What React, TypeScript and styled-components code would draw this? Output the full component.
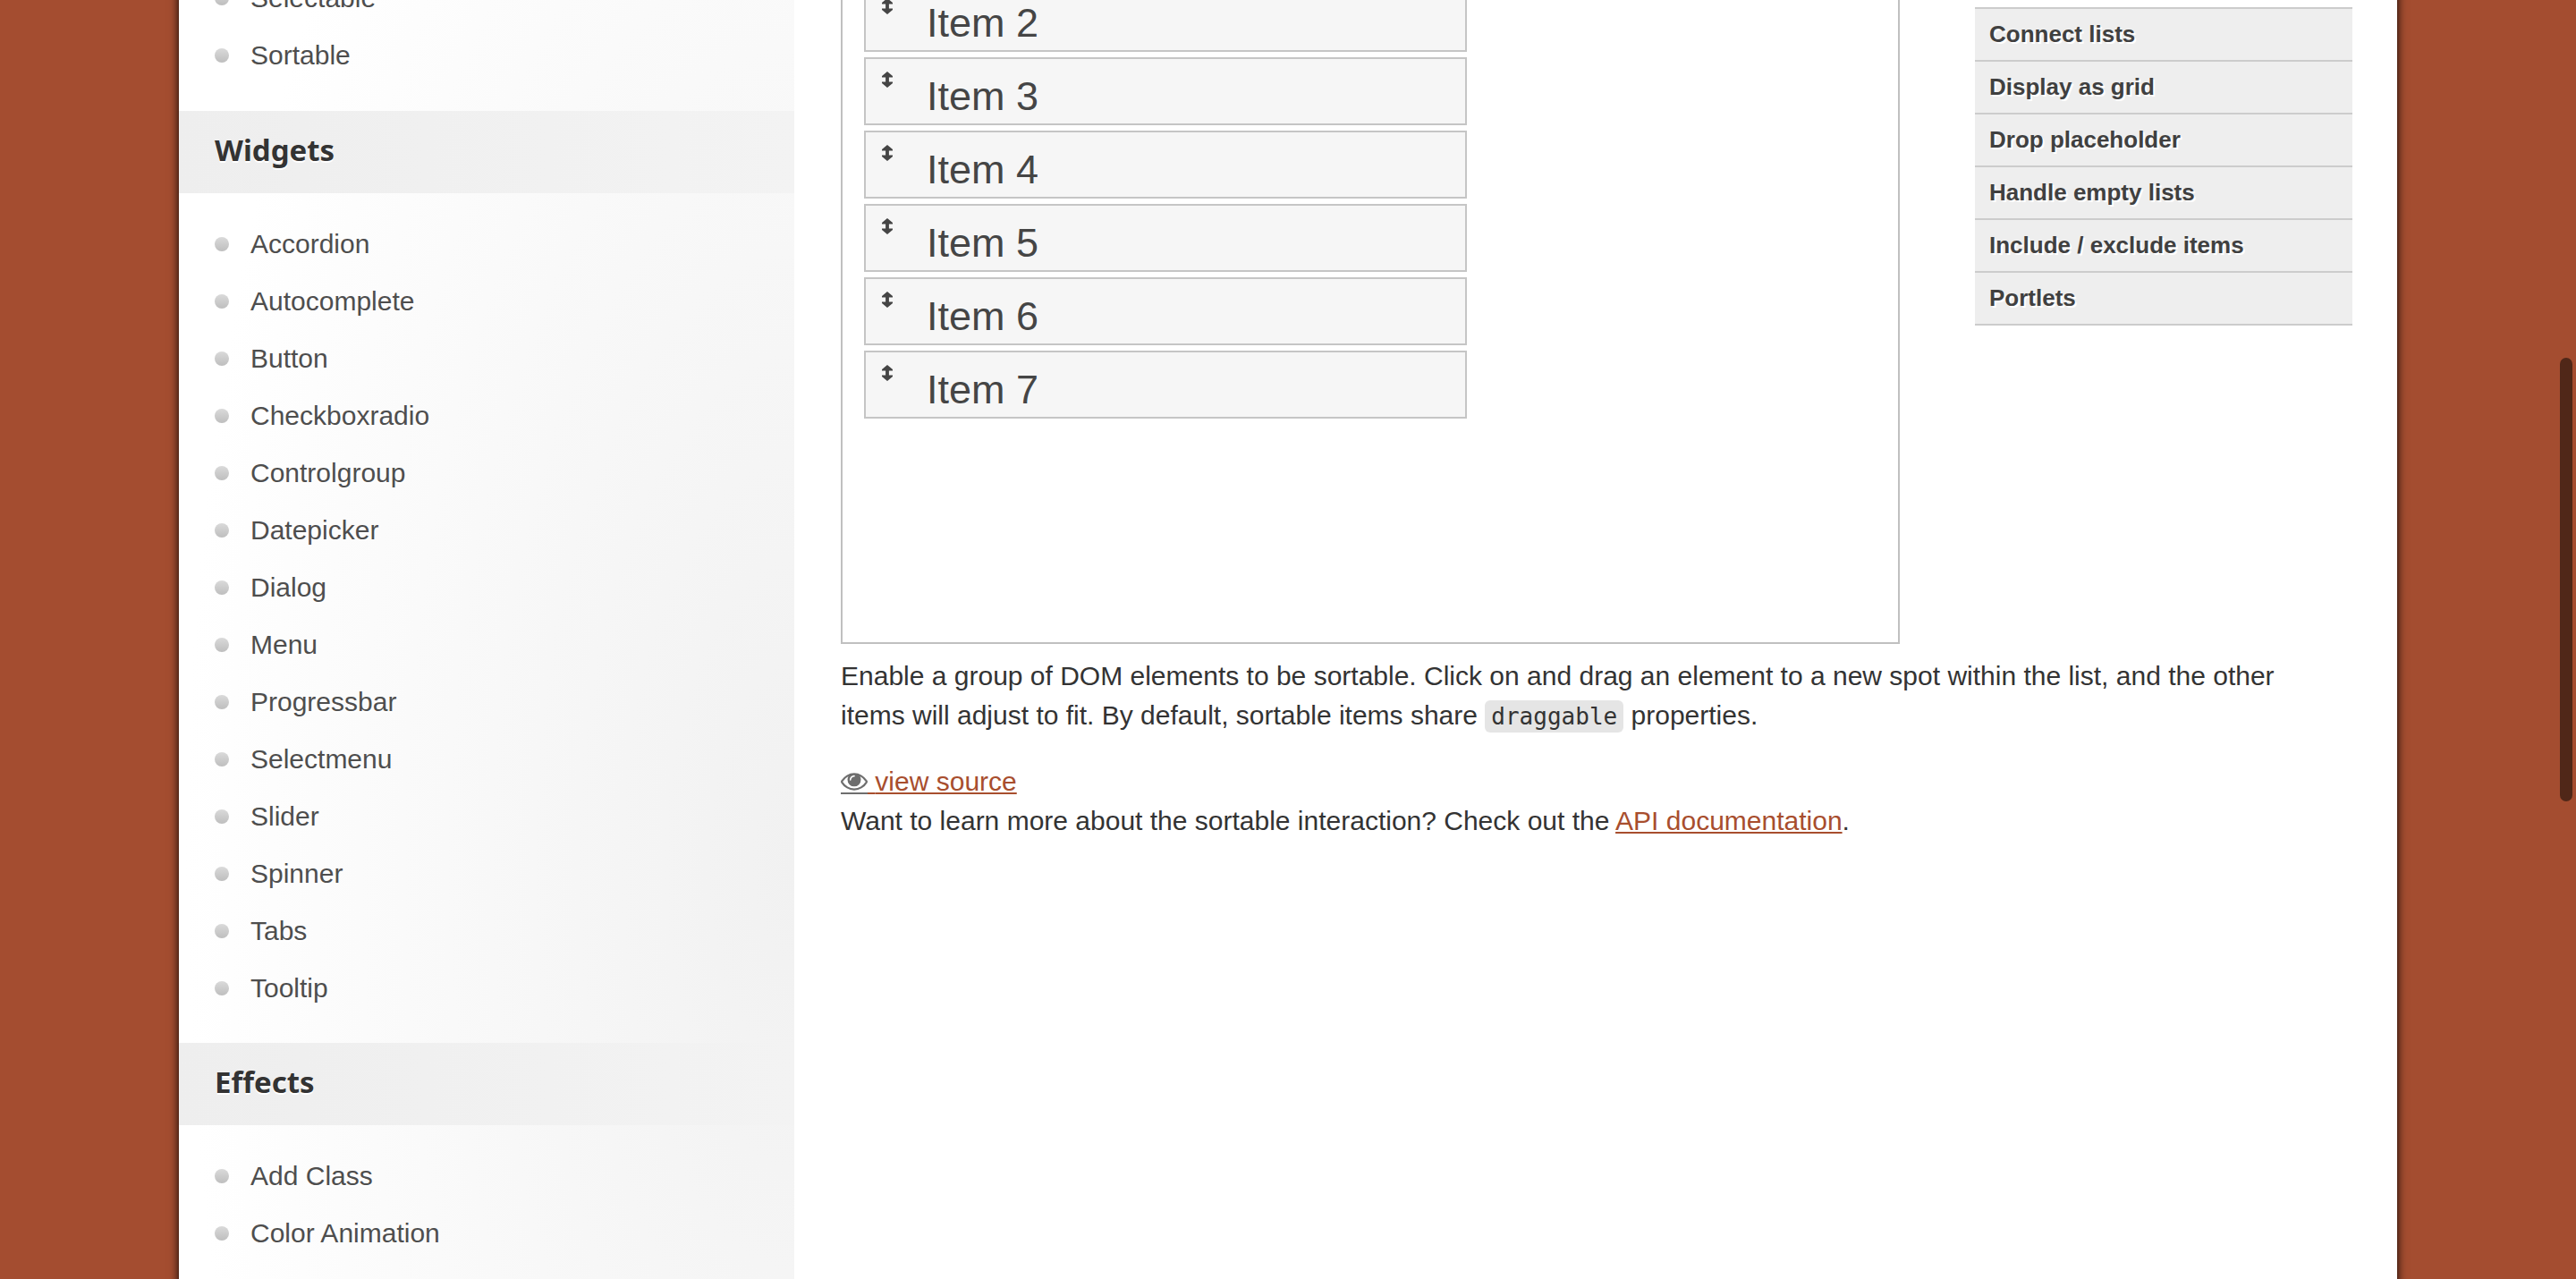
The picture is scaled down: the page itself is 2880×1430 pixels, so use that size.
import React from "react";
import styled, { createGlobalStyle } from "styled-components";

const sans = '"Liberation Sans", Arial, Helvetica, sans-serif';
const heading = '"Noto Sans", "Open Sans", sans-serif';
const mono = '"DejaVu Sans Mono", "Liberation Mono", monospace';

const GlobalStyle = createGlobalStyle`
  * { box-sizing: border-box; }
  body {
    margin: 0;
    background: #a44d30;
    color: #333;
    font-family: ${sans};
    font-size: 30px;
    line-height: 44px;
  }
  a { color: #a84e2e; }
  ul, ol, p, h3 { margin: 0; padding: 0; }
  ul, ol { list-style: none; }
`;

const Viewport = styled.div`
  height: 100vh;
  overflow: hidden;
  position: relative;
`;

const Container = styled.div`
  display: flex;
  min-height: calc(100vh + 34px);
  margin: -34px 200px 0;
  background: #fff;
  box-shadow: 0 0 10px #000;
`;

const Sidebar = styled.aside`
  flex: 0 0 688px;
  background: radial-gradient(ellipse 680px 1600px at 100% 1000px, #f1f1f1, #fff);
`;

const NavTitle = styled.h3`
  padding: 0 40px 4px;
  background: linear-gradient(to right, #eee, #f3f3f3);
  font: 700 33px/88px ${heading};
  color: #333;
  text-shadow: 0 2px 0 #fff;
`;

const NavList = styled.ul<{ $continued?: boolean }>`
  padding: ${(p) => (p.$continued ? "0 40px 30px" : "25px 40px 29px")};
`;

const NavItem = styled.li`
  display: flex;
  align-items: center;
  gap: 24px;
  height: 64px;

  &::before {
    content: "";
    width: 16px;
    height: 16px;
    border-radius: 50%;
    background: linear-gradient(#dadada, #bebebe);
  }
`;

const NavLink = styled.a`
  color: #4e4e4e;
  text-decoration: none;
  text-shadow: 0 2px 0 #fff;
`;

const Content = styled.main`
  flex: 1;
  min-width: 0;
  padding: 0 50px 0 52px;
`;

const DemoRow = styled.div`
  display: flex;
  align-items: flex-start;
  gap: 84px;
  margin-bottom: 14px;
`;

const DemoFrame = styled.section`
  flex: 1;
  height: 754px;
  padding: 16px 24px;
  border: 2px solid #c0c0c0;
  border-top: 0;
`;

const SortableList = styled.ul`
  display: grid;
  gap: 6px;
  width: 674px;
  max-width: 100%;
`;

const SortableItem = styled.li`
  display: flex;
  gap: 38px;
  height: 76px;
  padding: 12px 18px 0;
  border: 2px solid #c5c5c5;
  background: #f6f6f6;
  color: #454545;
  font-size: 45px;
  line-height: 60px;
  cursor: move;

  svg {
    flex: none;
    margin-top: 2px;
  }
`;

const Examples = styled.ul`
  flex: 0 0 422px;
  margin-top: 42px;
  border-top: 2px solid #ccc;
`;

const Example = styled.li`
  border-bottom: 2px solid #ccc;
  background: #eee;
`;

const ExampleLink = styled.a`
  display: block;
  padding: 0 16px;
  color: #404040;
  font-size: 26px;
  font-weight: 700;
  line-height: 57px;
  text-decoration: none;
  text-shadow: 2px 2px 0 #fff;
`;

const Description = styled.p`
  margin-bottom: 30px;
  padding-right: 30px;
`;

const Code = styled.code`
  padding: 3px 7px;
  border-radius: 6px;
  background: #e5e5e5;
  font: 26px/32px ${mono};
`;

const TextLink = styled.a`
  text-decoration-thickness: 2px;
  text-underline-offset: 2px;
`;

const EyeBox = styled.span`
  display: inline-flex;
  align-items: flex-start;
  height: 24px;
  border-bottom: 2px solid #6e6e6e;
  vertical-align: baseline;
`;

const ScrollThumb = styled.div`
  position: absolute;
  top: 400px;
  right: 4px;
  width: 14px;
  height: 496px;
  border-radius: 7px;
  background: #502718;
`;

const EyeIcon = () => (
  <svg width="30" height="20" viewBox="0 384 1792 1152" fill="#6e6e6e" aria-hidden="true">
    <path d="M1664 960q-152-236-381-353 61 104 61 225 0 185-131.5 316.5t-316.5 131.5-316.5-131.5-131.5-316.5q0-121 61-225-229 117-381 353 133 205 333.5 326.5t434.5 121.5 434.5-121.5 333.5-326.5zm-720-384q0-20-14-34t-34-14q-125 0-214.5 89.5t-89.5 214.5q0 20 14 34t34 14 34-14 14-34q0-86 61-147t147-61q20 0 34-14t14-34zm848 384q0 34-20 69-140 230-376.5 368.5t-499.5 138.5-499.5-139-376.5-368q-20-35-20-69t20-69q140-229 376.5-368t499.5-139 499.5 139 376.5 368q20 35 20 69z" />
  </svg>
);

const ArrowIcon = () => (
  <svg width="12" height="18" viewBox="0 0 12 18" fill="#454545" aria-hidden="true">
    <path d="M6 0 L12 5 V6.6 H7.9 V11.4 H12 V13 L6 18 L0 13 V11.4 H4.1 V6.6 H0 V5 Z" />
  </svg>
);

const interactions = ["Selectable", "Sortable"];
const widgets = [
  "Accordion", "Autocomplete", "Button", "Checkboxradio", "Controlgroup",
  "Datepicker", "Dialog", "Menu", "Progressbar", "Selectmenu", "Slider",
  "Spinner", "Tabs", "Tooltip",
];
const effects = ["Add Class", "Color Animation"];
const sortable = ["Item 2", "Item 3", "Item 4", "Item 5", "Item 6", "Item 7"];
const examples = [
  "Connect lists", "Display as grid", "Drop placeholder",
  "Handle empty lists", "Include / exclude items", "Portlets",
];

const Nav = ({ items, continued }: { items: string[]; continued?: boolean }) => (
  <NavList $continued={continued}>
    {items.map((name) => (
      <NavItem key={name}>
        <NavLink href="#">{name}</NavLink>
      </NavItem>
    ))}
  </NavList>
);

export default function App() {
  return (
    <Viewport>
      <GlobalStyle />
      <Container>
        <Sidebar>
          <Nav items={interactions} continued />
          <NavTitle>Widgets</NavTitle>
          <Nav items={widgets} />
          <NavTitle>Effects</NavTitle>
          <Nav items={effects} />
        </Sidebar>
        <Content>
          <DemoRow>
            <DemoFrame>
              <SortableList>
                {sortable.map((name) => (
                  <SortableItem key={name}>
                    <ArrowIcon />
                    {name}
                  </SortableItem>
                ))}
              </SortableList>
            </DemoFrame>
            <Examples>
              {examples.map((name) => (
                <Example key={name}>
                  <ExampleLink href="#">{name}</ExampleLink>
                </Example>
              ))}
            </Examples>
          </DemoRow>
          <Description>
            Enable a group of DOM elements to be sortable. Click on and drag an
            element to a new spot within the list, and the other items will
            adjust to fit. By default, sortable items share{" "}
            <Code>draggable</Code> properties.
          </Description>
          <p>
            <TextLink href="#">
              <EyeBox>
                <EyeIcon />
              </EyeBox>{" "}
              view source
            </TextLink>
          </p>
          <p>
            Want to learn more about the sortable interaction? Check out the{" "}
            <TextLink href="#">API documentation</TextLink>.
          </p>
        </Content>
      </Container>
      <ScrollThumb />
    </Viewport>
  );
}
